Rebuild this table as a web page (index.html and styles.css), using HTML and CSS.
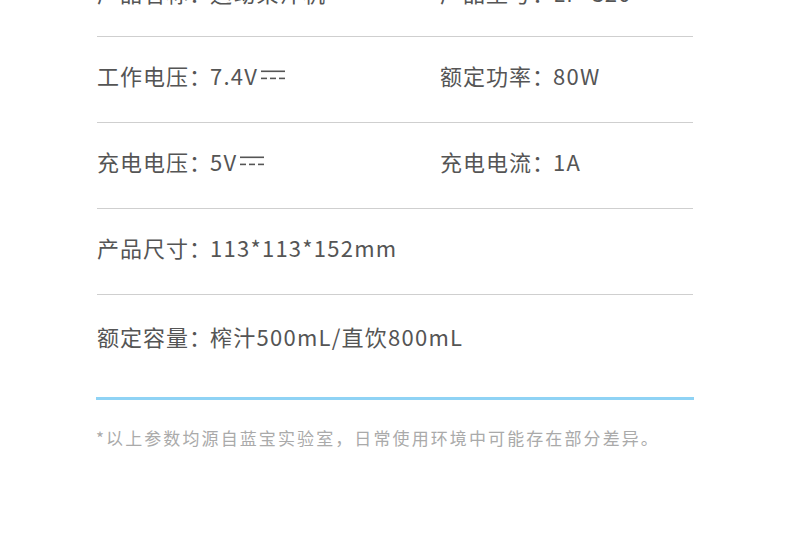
FILE: index.html
```html
<!DOCTYPE html>
<html lang="zh">
<head>
<meta charset="utf-8">
<link rel="stylesheet" href="styles.css">
</head>
<body>
<div class="spec">
  <div class="row first">
    <div class="cell">产品名称<span class="colon">：</span><span class="val">运动果汁机</span></div>
    <div class="cell">产品型号<span class="colon">：</span><span class="val">LP-C20</span></div>
  </div>
  <div class="row">
    <div class="cell">工作电压<span class="colon">：</span><span class="val">7.4V</span><svg class="dc" viewBox="0 0 24 10" width="24" height="10"><rect x="0" y="0.5" width="24" height="1.6" fill="#555"/><rect x="0" y="7.6" width="6" height="1.6" fill="#555"/><rect x="9" y="7.6" width="6" height="1.6" fill="#555"/><rect x="18" y="7.6" width="6" height="1.6" fill="#555"/></svg></div>
    <div class="cell">额定功率<span class="colon">：</span><span class="val">80W</span></div>
  </div>
  <div class="row">
    <div class="cell">充电电压<span class="colon">：</span><span class="val">5V</span><svg class="dc" viewBox="0 0 24 10" width="24" height="10"><rect x="0" y="0.5" width="24" height="1.6" fill="#555"/><rect x="0" y="7.6" width="6" height="1.6" fill="#555"/><rect x="9" y="7.6" width="6" height="1.6" fill="#555"/><rect x="18" y="7.6" width="6" height="1.6" fill="#555"/></svg></div>
    <div class="cell">充电电流<span class="colon">：</span><span class="val">1A</span></div>
  </div>
  <div class="row">
    <div class="cell">产品尺寸<span class="colon">：</span><span class="val">113*113*152mm</span></div>
  </div>
  <div class="row last">
    <div class="cell">额定容量<span class="colon">：</span><span class="val">榨汁500mL/直饮800mL</span></div>
  </div>
  <p class="note">*以上参数均源自蓝宝实验室，日常使用环境中可能存在部分差异。</p>
</div>
</body>
</html>
```
FILE: styles.css
```css
html, body {
  margin: 0;
  padding: 0;
  background: #fff;
}
body {
  width: 790px;
  height: 560px;
  overflow: hidden;
  font-family: "Noto Sans CJK SC", "Noto Sans", sans-serif;
  color: #555;
}
.spec {
  margin: -49px 0 0 97px;
  width: 596px;
}
.row {
  display: flex;
  align-items: center;
  height: 86px;
  border-bottom: 1px solid #cfcfcf;
  padding-bottom: 10px;
  box-sizing: border-box;
}
.row.first {
  padding-bottom: 4px;
}
.row.last {
  height: 105px;
  border-bottom: 3px solid #8fd3f5;
  margin-left: -1px;
  width: 598px;
  padding-left: 1px;
  padding-bottom: 20px;
}
.cell {
  flex: 0 0 343px;
  font-size: 22px;
  letter-spacing: 1px;
  display: flex;
  align-items: center;
  white-space: nowrap;
}
.colon {
  margin-right: -2px;
}
.val {
  letter-spacing: 1.25px;
}
.dc {
  margin-left: 3px;
  margin-top: 1px;
}
.note {
  margin: 25px 0 0 -1px;
  font-size: 17px;
  letter-spacing: 2.1px;
  color: #aaa;
  white-space: nowrap;
}
```
